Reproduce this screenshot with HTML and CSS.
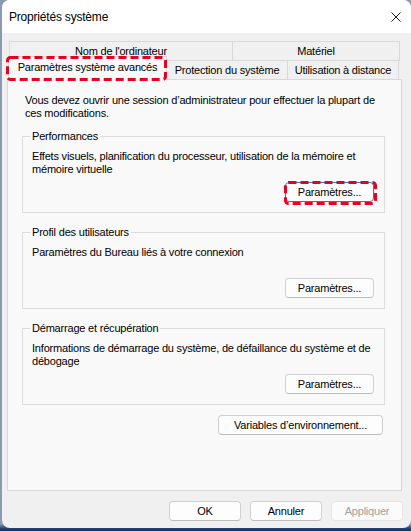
FILE: index.html
```html
<!DOCTYPE html>
<html lang="fr">
<head>
<meta charset="utf-8">
<title>Propriétés système</title>
<link rel="stylesheet" href="styles.css">
</head>
<body>
<div class="window">
  <div class="titlebar">
    <span class="title">Propriétés système</span>
    <svg class="close" width="10" height="10" viewBox="0 0 10 10"><path d="M0.5 0.5 L9.5 9.5 M9.5 0.5 L0.5 9.5" stroke="#1a1a1a" stroke-width="1" fill="none"/></svg>
  </div>
  <div class="tabs">
    <div class="tabrow row-back">
      <div class="tab t-nom">Nom de l'ordinateur</div>
      <div class="tab t-mat">Matériel</div>
    </div>
    <div class="tabrow row-front">
      <div class="tab selected">Paramètres système avancés
        <span class="annot annot-tab"><svg width="161" height="25" viewBox="0 0 161 25"><rect x="1.5" y="1.5" width="158" height="22" rx="3" fill="none" stroke="#e8001f" stroke-width="3" stroke-dasharray="8 4"/></svg></span>
      </div>
      <div class="tab t-prot">Protection du système</div>
      <div class="tab t-util">Utilisation à distance</div>
    </div>
  </div>
  <div class="panel">
    <p class="intro">Vous devez ouvrir une session d’administrateur pour effectuer la plupart de<br>ces modifications.</p>
    <fieldset class="group">
      <legend>Performances</legend>
      <p class="desc">Effets visuels, planification du processeur, utilisation de la mémoire et<br>mémoire virtuelle</p>
      <div class="actions">
        <button class="btn focused">Paramètres...
          <span class="annot annot-btn"><svg width="93" height="24" viewBox="0 0 93 24"><rect x="1.5" y="1.5" width="90" height="21" rx="3" fill="none" stroke="#e8001f" stroke-width="3" stroke-dasharray="8 4"/></svg></span>
        </button>
      </div>
    </fieldset>
    <fieldset class="group">
      <legend>Profil des utilisateurs</legend>
      <p class="desc">Paramètres du Bureau liés à votre connexion</p>
      <div class="actions"><button class="btn">Paramètres...</button></div>
    </fieldset>
    <fieldset class="group">
      <legend>Démarrage et récupération</legend>
      <p class="desc">Informations de démarrage du système, de défaillance du système et de<br>débogage</p>
      <div class="actions"><button class="btn">Paramètres...</button></div>
    </fieldset>
    <div class="env"><button class="btn btn-env">Variables d’environnement...</button></div>
  </div>
  <div class="footer">
    <button class="btn btn-foot">OK</button>
    <button class="btn btn-foot">Annuler</button>
    <button class="btn btn-foot" disabled>Appliquer</button>
  </div>
</div>
</body>
</html>
```
FILE: styles.css
```css
html {
  background: linear-gradient(to bottom, #8a9ab0 0, #8a9ab0 524px, #1f3668 529px);
  height: 100%;
}
body {
  margin: 0;
  height: 531px;
  overflow: hidden;
  font-family: "Liberation Sans", Arial, sans-serif;
  font-size: 11px;
  letter-spacing: -0.2px;
  line-height: 13px;
  color: #000;
}
.window {
  margin-left: 2px;
  width: 409px;
  height: 528px;
  background: #f0f0f0;
  border-radius: 8px;
  overflow: hidden;
  display: flex;
  flex-direction: column;
}
.titlebar {
  height: 33px;
  flex: none;
  background: #ffffff;
  display: flex;
  align-items: center;
  justify-content: space-between;
  padding: 0 10px 0 7px;
  box-sizing: border-box;
}
.title {
  font-size: 12px;
  letter-spacing: -0.2px;
  padding-top: 1px;
}
.close { display: block; }
.tabs {
  margin-top: 8px;
  padding-left: 6px;
  flex: none;
}
.tabrow {
  display: flex;
  align-items: flex-end;
}
.tab {
  box-sizing: border-box;
  border: 1px solid #d9d9d9;
  border-bottom: none;
  background: #f0f0f0;
  display: flex;
  align-items: center;
  justify-content: center;
  white-space: nowrap;
}
.row-back { padding-left: 1px; }
.row-back .tab { height: 20px; padding-bottom: 1px; }
.t-nom { width: 224px; }
.t-mat { width: 167px; border-left: none; }
.row-front {
  margin-top: -5px;
  height: 23px;
}
.row-front .tab { height: 19px; }
.tab.selected {
  position: relative;
  z-index: 2;
  width: 159px;
  height: 24px;
  margin-bottom: -1px;
  background: #f9f9f9;
  padding-bottom: 2px;
}
.t-prot { width: 121px; border-left: none; }
.t-util { width: 111px; border-left: none; }
.annot {
  position: absolute;
  pointer-events: none;
  line-height: 0;
}
.annot svg { display: block; }
.annot-tab { left: -3px; top: -1px; }
.annot-btn { left: -2px; top: -2px; }
.panel {
  flex: 1;
  margin-left: 5px;
  width: 395px;
  box-sizing: border-box;
  border: 1px solid #d9d9d9;
  background: #f9f9f9;
  padding: 14px 0 0 14px;
  position: relative;
  z-index: 1;
}
.intro {
  margin: 0 0 0 3px;
  white-space: nowrap;
}
.group {
  margin: 10px 0 0 0;
  width: 363px;
  min-width: 0;
  box-sizing: border-box;
  border: 1px solid #dcdcdc;
  padding: 7px 10px 10px 9px;
}
.group + .group { margin-top: 13px; }
.group legend {
  padding: 0 2px;
  margin-left: -2px;
  line-height: 13px;
}
.desc {
  margin: 0;
  min-height: 26px;
  white-space: nowrap;
}
.actions {
  margin-top: 6px;
  display: flex;
  justify-content: flex-end;
}
.btn {
  font-family: inherit;
  font-size: 11px;
  letter-spacing: -0.2px;
  color: #000;
  height: 20px;
  box-sizing: border-box;
  padding: 0;
  line-height: 18px;
  background: #fdfdfd;
  border: 1px solid #d0d0d0;
  border-bottom-color: #bdbdbd;
  border-radius: 4px;
  position: relative;
}
.group .btn { width: 89px; }
.btn.focused { border-color: #2b7ad0; }
.env {
  width: 361px;
  margin-top: 10px;
  display: flex;
  justify-content: flex-end;
}
.btn-env { width: 165px; }
.footer {
  flex: none;
  height: 37px;
  box-sizing: border-box;
  padding: 10px 8px 0 0;
  display: flex;
  justify-content: flex-end;
  gap: 9px;
}
.btn-foot { width: 72px; }
.btn:disabled {
  color: #a0a0a0;
  background: #fbfbfb;
  border-color: #e5e5e5;
}
```
